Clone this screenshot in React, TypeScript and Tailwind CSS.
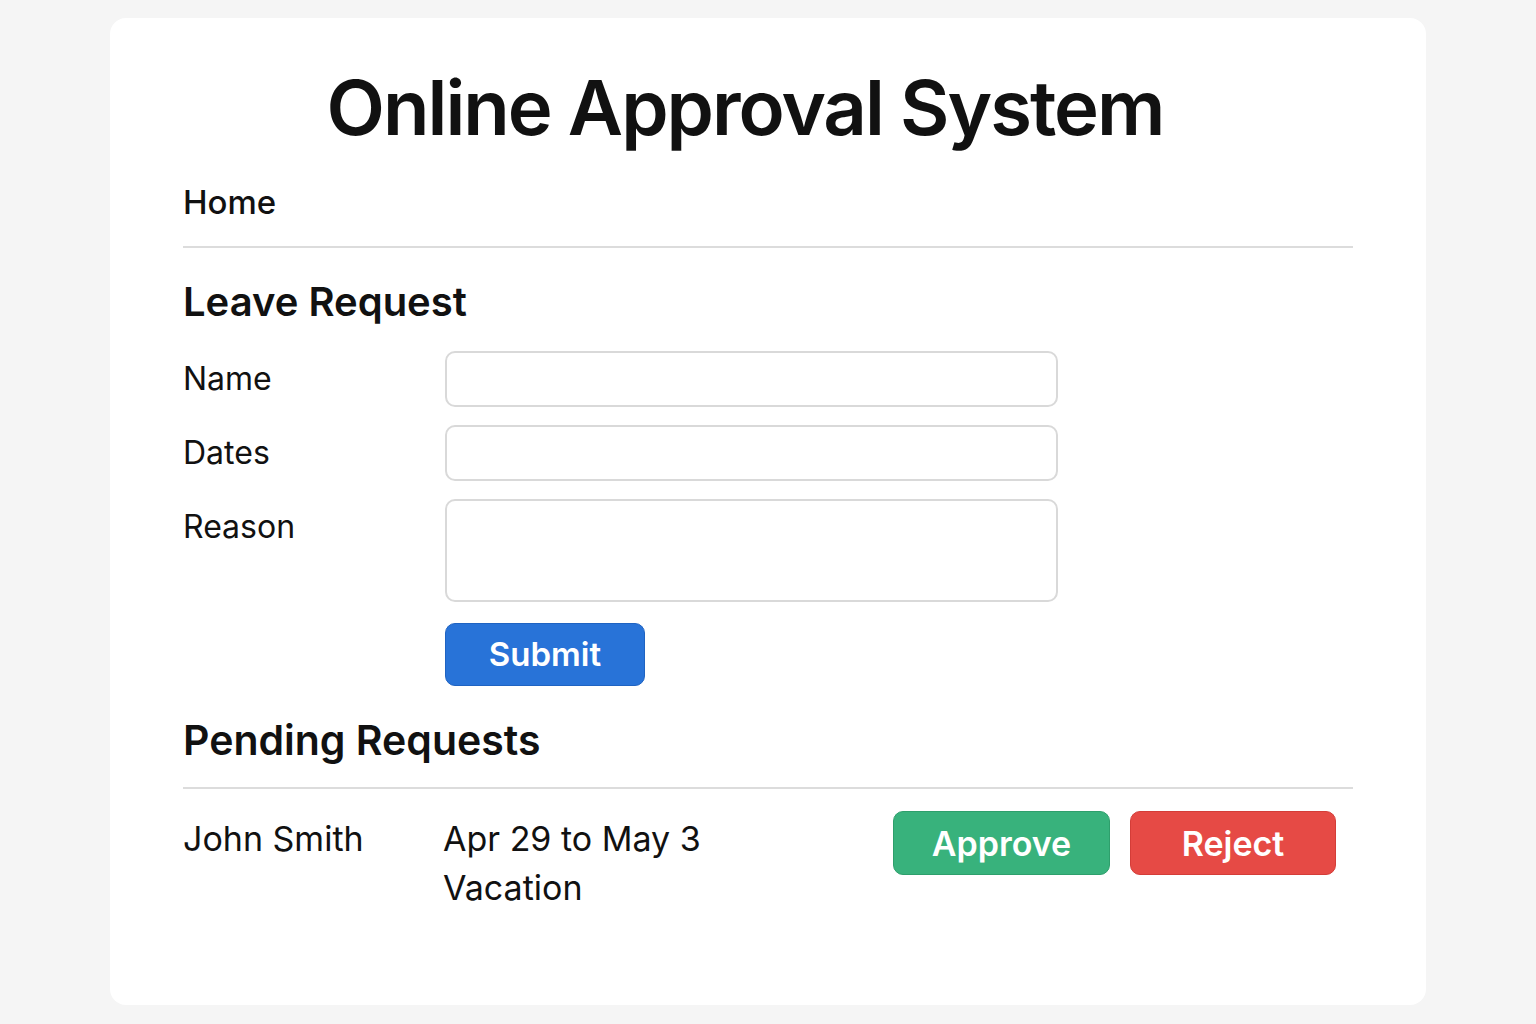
import React from 'react';

const font = { fontFamily: 'Inter, "Noto Sans", sans-serif' };

export default function App() {
  return (
    <div className="min-h-screen bg-[#f5f5f5] pt-[18px]" style={font}>
      <div className="mx-auto h-[987px] w-[1316px] rounded-2xl bg-white px-[73px] text-[#111111]">
        {/* 标题 */}
        <h1 className="pt-[51px] pr-[46px] text-center text-[76px] font-semibold leading-none tracking-[-2px]">
          Online Approval System
        </h1>

        {/* 导航 */}
        <div className="mt-[41px] border-b-2 border-[#dcdcdc] pb-[27px]">
          <span className="block text-[33px] font-medium leading-none">Home</span>
        </div>

        {/* 请假表单 */}
        <h2 className="mt-[34px] text-[40px] font-semibold leading-none">Leave Request</h2>

        <div className="mt-[29px] grid grid-cols-[262px_613px] gap-y-[18px]">
          <label className="pt-[10px] text-[32px] leading-[36px]">Name</label>
          <input className="h-[56px] rounded-[10px] border-2 border-[#d9d9d9] px-3 outline-none" />

          <label className="pt-[10px] text-[32px] leading-[36px]">Dates</label>
          <input className="h-[56px] rounded-[10px] border-2 border-[#d9d9d9] px-3 outline-none" />

          <label className="pt-[10px] text-[32px] leading-[36px]">Reason</label>
          <textarea className="h-[103px] resize-none rounded-[10px] border-2 border-[#d9d9d9] px-3 outline-none" />

          <div />
          <div className="pt-[3px]">
            <button className="h-[63px] w-[200px] rounded-[10px] border border-[#1f63c2] bg-[#2873d8] text-[33px] font-semibold text-white">
              Submit
            </button>
          </div>
        </div>

        {/* 待审批 */}
        <div className="mt-[34px] border-b-2 border-[#dcdcdc] pb-[26px]">
          <h2 className="text-[41px] font-semibold leading-none">Pending Requests</h2>
        </div>

        <div className="flex pt-[22px] pr-[17px]">
          <div className="w-[260px] pt-[3px] text-[34px] leading-[49px]">John Smith</div>
          <div className="flex-1 pt-[3px] text-[34px] leading-[49px]">
            <div>Apr 29 to May 3</div>
            <div>Vacation</div>
          </div>
          <div className="flex gap-[20px]">
            <button className="h-[64px] w-[217px] rounded-[10px] border border-[#2e9f6c] bg-[#38b27c] text-[34px] font-semibold text-white">
              Approve
            </button>
            <button className="h-[64px] w-[206px] rounded-[10px] border border-[#d43d38] bg-[#e64a45] text-[34px] font-semibold text-white">
              Reject
            </button>
          </div>
        </div>
      </div>
    </div>
  );
}
